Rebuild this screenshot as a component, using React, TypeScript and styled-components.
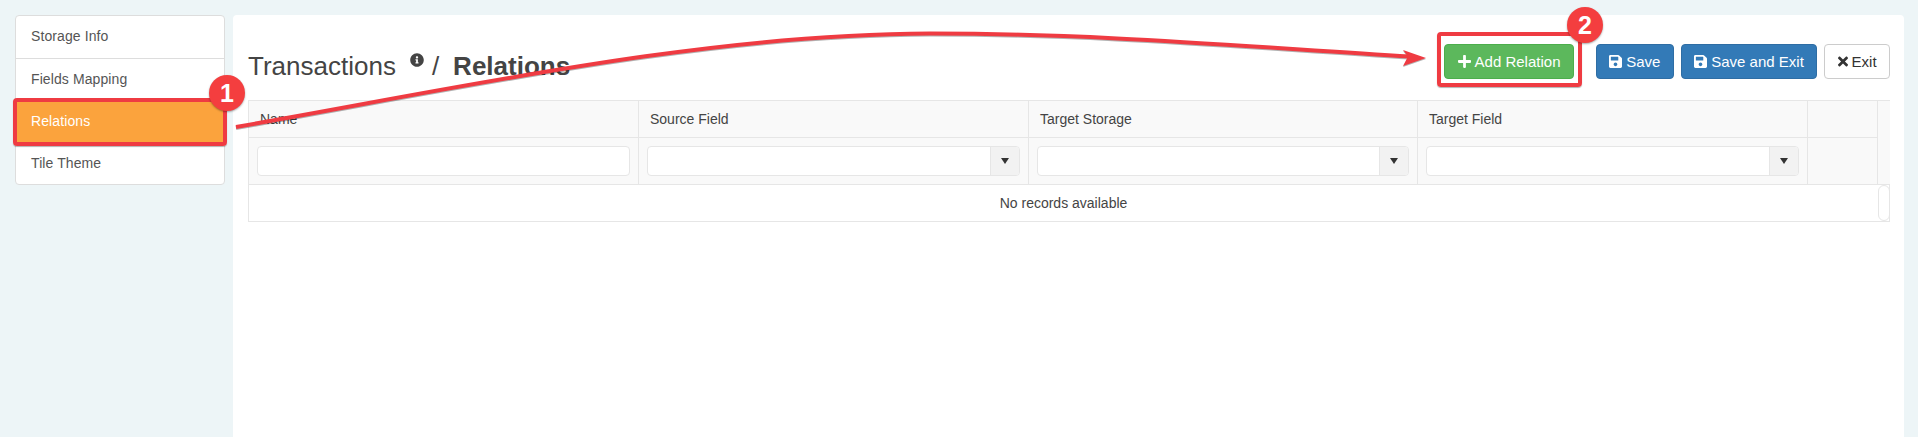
import React from 'react';
import styled, { createGlobalStyle } from 'styled-components';
import { FaPlus, FaSave, FaTimes, FaInfoCircle } from 'react-icons/fa';

const GlobalStyle = createGlobalStyle`
  html, body {
    margin: 0;
    padding: 0;
    height: 100%;
    background: #edf5f7;
    font-family: "Liberation Sans", Arial, sans-serif;
    font-size: 14px;
    color: #333;
    overflow: hidden;
  }
`;

const Page = styled.div`
  position: relative;
  display: flex;
  align-items: flex-start;
  gap: 8px;
  height: 437px;
  padding: 15px 14px 0 15px;
  box-sizing: border-box;
`;

const Sidebar = styled.nav`
  flex: 0 0 210px;
  display: flex;
  flex-direction: column;
  background: #fff;
  border: 1px solid #ddd;
  border-radius: 4px;
  box-sizing: border-box;
`;

const NavItem = styled.div<{ $active?: boolean; $first?: boolean }>`
  height: 42px;
  line-height: 41px;
  padding-left: 15px;
  box-sizing: border-box;
  letter-spacing: 0.1px;
  color: ${(p) => (p.$active ? '#fff' : '#555')};
  background: ${(p) => (p.$active ? '#fba33d' : 'transparent')};
  border-top: ${(p) => (p.$first ? 'none' : '1px solid #ddd')};
`;

const Panel = styled.main`
  flex: 1;
  height: 422px;
  background: #fff;
  border-radius: 4px 4px 0 0;
  padding: 29px 14px 0 15px;
  box-sizing: border-box;
`;

const Header = styled.header`
  display: flex;
  align-items: flex-start;
  justify-content: space-between;
  height: 56px;
`;

const Title = styled.h1`
  display: flex;
  align-items: baseline;
  margin: 8px 0 0;
  font-size: 26px;
  font-weight: 400;
  line-height: 28px;
  color: #444;
`;

const InfoIcon = styled.span`
  display: inline-flex;
  margin: 0 8px 0 14px;
  font-size: 14px;
  color: #444;
  transform: translateY(-8px);
`;

const Current = styled.strong`
  margin-left: 14px;
  font-weight: 700;
  color: #444;
`;

const Actions = styled.div`
  display: flex;
  gap: 7px;
`;

const Button = styled.button<{ $variant: 'success' | 'primary' | 'default'; $gapAfter?: boolean }>`
  display: inline-flex;
  align-items: center;
  justify-content: center;
  gap: 4px;
  height: 35px;
  padding: 0 12.4px;
  font: 15px "Liberation Sans", Arial, sans-serif;
  border-radius: 4px;
  border: 1px solid
    ${(p) => (p.$variant === 'success' ? '#4cae4c' : p.$variant === 'primary' ? '#2e6da4' : '#ccc')};
  background: ${(p) => (p.$variant === 'success' ? '#5cb85c' : p.$variant === 'primary' ? '#337ab7' : '#fff')};
  color: ${(p) => (p.$variant === 'default' ? '#333' : '#fff')};
  margin-right: ${(p) => (p.$gapAfter ? '15px' : '0')};
  svg {
    flex: none;
    width: ${(p) => (p.$variant === 'default' ? '10px' : '13px')};
    height: 15px;
  }
`;

const Grid = styled.div`
  display: grid;
  grid-template-columns: 390px 390px 389px 390px 70px 12px;
  grid-template-rows: 37px 47px 36px;
  border: 1px solid #e6e6e6;
  box-sizing: border-box;
  width: 1642px;
`;

const HeadCell = styled.div<{ $scroll?: boolean }>`
  display: flex;
  align-items: center;
  padding-left: 11px;
  background: #f9f9f9;
  color: #444;
  border-right: ${(p) => (p.$scroll ? 'none' : '1px solid #e6e6e6')};
  border-bottom: 1px solid #e6e6e6;
  box-sizing: border-box;
  ${(p) => p.$scroll && 'grid-column: 6; grid-row: 1 / 3;'}
`;

const FilterCell = styled.div`
  display: flex;
  align-items: center;
  padding: 0 8px;
  background: #f9f9f9;
  border-right: 1px solid #e6e6e6;
  border-bottom: 1px solid #e6e6e6;
  box-sizing: border-box;
`;

const TextFilter = styled.div`
  flex: 1;
  height: 30px;
  background: #fff;
  border: 1px solid #e6e6e6;
  border-radius: 4px;
  box-sizing: border-box;
`;

const SelectFilter = styled.div`
  flex: 1;
  display: flex;
  height: 30px;
  background: #fff;
  border: 1px solid #e6e6e6;
  border-radius: 4px;
  box-sizing: border-box;
  overflow: hidden;
`;

const SelectArrow = styled.span`
  margin-left: auto;
  flex: 0 0 28px;
  display: flex;
  align-items: center;
  justify-content: center;
  background: #f2f2f2;
  border-left: 1px solid #e6e6e6;
  &::after {
    content: '';
    border-left: 4px solid transparent;
    border-right: 4px solid transparent;
    border-top: 6px solid #333;
  }
`;

const EmptyRow = styled.div`
  grid-column: 1 / 6;
  display: flex;
  align-items: center;
  justify-content: center;
  color: #444;
`;

const ScrollThumb = styled.div`
  border: 1px solid #e6e6e6;
  border-radius: 6px;
  background: #fff;
`;

// tutorial annotations lying over the page
const HighlightBox = styled.div<{ $x: number; $y: number; $w: number; $h: number }>`
  position: absolute;
  left: ${(p) => p.$x}px;
  top: ${(p) => p.$y}px;
  width: ${(p) => p.$w}px;
  height: ${(p) => p.$h}px;
  box-sizing: border-box;
  border: 4px solid #ef3b42;
  border-radius: 4px;
  box-shadow: 0 1px 1px rgba(0, 0, 0, 0.3);
  pointer-events: none;
`;

const Badge = styled.div<{ $x: number; $y: number }>`
  position: absolute;
  left: ${(p) => p.$x}px;
  top: ${(p) => p.$y}px;
  width: 36px;
  height: 36px;
  border-radius: 50%;
  background: #f43e3f;
  color: #fff;
  font-size: 25px;
  font-weight: 700;
  line-height: 36px;
  text-align: center;
  box-shadow: 0 1px 2px rgba(0, 0, 0, 0.35);
`;

const ArrowLayer = styled.svg`
  position: absolute;
  left: 0;
  top: 0;
  pointer-events: none;
  filter: drop-shadow(0 1px 0.5px rgba(0, 0, 0, 0.3));
`;

const columns = ['Name', 'Source Field', 'Target Storage', 'Target Field'];

export default function App() {
  return (
    <>
      <GlobalStyle />
      <Page>
        <Sidebar>
          <NavItem $first>Storage Info</NavItem>
          <NavItem>Fields Mapping</NavItem>
          <NavItem $active>Relations</NavItem>
          <NavItem>Tile Theme</NavItem>
        </Sidebar>
        <Panel>
          <Header>
            <Title>
              Transactions
              <InfoIcon>
                <FaInfoCircle />
              </InfoIcon>
              /<Current>Relations</Current>
            </Title>
            <Actions>
              <Button $variant="success" $gapAfter>
                <FaPlus />
                Add Relation
              </Button>
              <Button $variant="primary">
                <FaSave />
                Save
              </Button>
              <Button $variant="primary">
                <FaSave />
                Save and Exit
              </Button>
              <Button $variant="default">
                <FaTimes />
                Exit
              </Button>
            </Actions>
          </Header>
          <Grid>
            {columns.map((c) => (
              <HeadCell key={c}>{c}</HeadCell>
            ))}
            <HeadCell />
            <HeadCell $scroll />
            <FilterCell>
              <TextFilter />
            </FilterCell>
            {columns.slice(1).map((c) => (
              <FilterCell key={c}>
                <SelectFilter>
                  <SelectArrow />
                </SelectFilter>
              </FilterCell>
            ))}
            <FilterCell />
            <EmptyRow>No records available</EmptyRow>
            <ScrollThumb />
          </Grid>
        </Panel>
        <HighlightBox $x={13} $y={98} $w={214} $h={48} />
        <HighlightBox $x={1437} $y={32} $w={145} $h={55} />
        <ArrowLayer width="1918" height="437" viewBox="0 0 1918 437">
          <path
            d="M236 127 C 450 90, 700 34, 930 33.5 C 1100 33.5, 1250 47, 1410 56.5"
            fill="none"
            stroke="#ef3b42"
            strokeWidth="4"
          />
          <path d="M1426 58 L1403 50 L1408 56.5 L1403 66 Z" fill="#ef3b42" />
        </ArrowLayer>
        <Badge $x={209} $y={75}>1</Badge>
        <Badge $x={1567} $y={7}>2</Badge>
      </Page>
    </>
  );
}
